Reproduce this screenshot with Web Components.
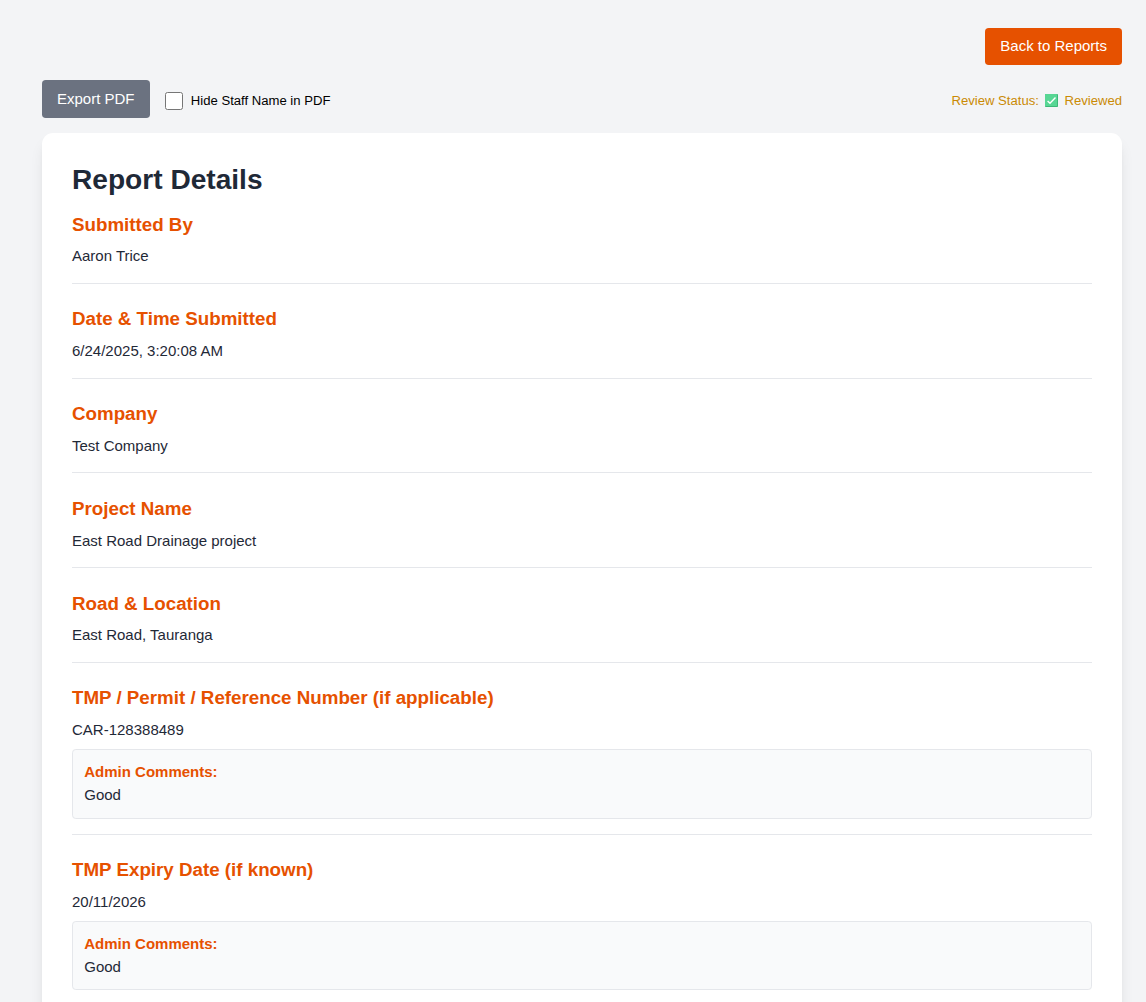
<!DOCTYPE html>
<html lang="en">
<head>
<meta charset="utf-8">
<title>Report Details</title>
<style>
html{font-size:15px;height:100%;overflow:hidden}
body{margin:0;height:100%;overflow:hidden;background:#f3f4f6;color:#1f2937;font:15px/22.5px "Liberation Sans",Arial,sans-serif}
</style>
</head>
<body>
<report-page>
  <action-button slot="nav" tone="brand">Back to Reports</action-button>
  <report-toolbar slot="toolbar">
    <action-button>Export PDF</action-button>
    <check-option>Hide Staff Name in PDF</check-option>
    <review-status slot="status">Reviewed</review-status>
  </report-toolbar>
  <report-card heading="Report Details">
    <report-field label="Submitted By">Aaron Trice</report-field>
    <report-field label="Date &amp; Time Submitted">6/24/2025, 3:20:08 AM</report-field>
    <report-field label="Company">Test Company</report-field>
    <report-field label="Project Name">East Road Drainage project</report-field>
    <report-field label="Road &amp; Location">East Road, Tauranga</report-field>
    <report-field label="TMP / Permit / Reference Number (if applicable)">CAR-128388489<admin-comment slot="comment">Good</admin-comment></report-field>
    <report-field label="TMP Expiry Date (if known)">20/11/2026<admin-comment slot="comment">Good</admin-comment></report-field>
  </report-card>
</report-page>
<script>
const define = (name, markup, setup) => customElements.define(name, class extends HTMLElement {
  connectedCallback() {
    if (this.shadowRoot) return;
    const root = this.attachShadow({ mode: 'open' });
    root.innerHTML = markup;
    if (setup) setup(this, root);
  }
});

define('report-page', `<style>
:host{display:flex;flex-direction:column;gap:15px;width:1080px;padding:27.75px 24px 0 42px}
nav{display:flex;justify-content:flex-end}
</style><nav><slot name="nav"></slot></nav><slot name="toolbar"></slot><slot></slot>`);

define('action-button', `<style>
:host{display:block}
button{display:block;font:inherit;line-height:22.5px;color:#fff;background:#6b7280;border:0;border-radius:3.75px;padding:7.5px 15px;margin:0;cursor:pointer;white-space:nowrap}
:host([tone=brand]) button{background:#e65100}
</style><button type="button"><slot></slot></button>`);

define('report-toolbar', `<style>
:host{display:flex;align-items:center;justify-content:space-between}
.tools{display:flex;align-items:center;gap:15px}
</style><div class="tools"><slot></slot></div><slot name="status"></slot>`);

define('check-option', `<style>
:host{display:block;font-size:13.125px;line-height:18.75px;color:#000}
label{display:flex;align-items:center;gap:8.25px;padding-top:3.5px}
span{padding-top:1px}
input{appearance:none;box-sizing:border-box;width:18px;height:18px;margin:0;border:1px solid #767676;border-radius:2.5px;background:#fff}
</style><label><input type="checkbox"><span><slot></slot></span></label>`);

define('review-status', `<style>
:host{display:flex;align-items:center;font-size:13.125px;line-height:18.75px;color:#ca8a04;padding-top:2.5px;white-space:nowrap}
span{padding-top:1.5px}
svg{display:block;width:13px;height:13px;margin:0 6.5px 0 6px}
</style><span>Review Status:</span><svg viewBox="0 0 13 13" aria-hidden="true"><rect width="13" height="13" rx=".8" fill="#3cb878"/><rect width="12" height="12" rx=".6" fill="#57d694"/><path d="M2.6 6.9 5 9.3l5.5-5.7" fill="none" stroke="#fff" stroke-width="1.4"/></svg><span><slot></slot></span>`);

define('report-card', `<style>
:host{display:flex;flex-direction:column;background:#fff;border-radius:11.25px;padding:30px;box-shadow:0 10px 15px -3px rgba(0,0,0,.1),0 4px 6px -4px rgba(0,0,0,.1)}
h1{margin:0 0 15px;font-size:28.125px;line-height:33.75px;font-weight:700}
.fields{display:flex;flex-direction:column;gap:22.5px}
</style><h1></h1><div class="fields"><slot></slot></div>`,
  (el, root) => { root.querySelector('h1').textContent = el.getAttribute('heading'); });

define('report-field', `<style>
:host{display:flex;flex-direction:column;gap:7.5px;padding-bottom:15px;border-bottom:1px solid #e5e7eb}
h2{margin:0;font-size:18.75px;line-height:26.25px;font-weight:700;color:#e65100}
p{margin:0}
</style><h2></h2><p><slot></slot></p><slot name="comment"></slot>`,
  (el, root) => { root.querySelector('h2').textContent = el.getAttribute('label'); });

define('admin-comment', `<style>
:host{display:block;background:#f9fafb;border:1px solid #e5e7eb;border-radius:3.75px;padding:11.25px}
strong{display:block;color:#e65100}
p{margin:0}
</style><strong>Admin Comments:</strong><p><slot></slot></p>`);
</script>
</body>
</html>
